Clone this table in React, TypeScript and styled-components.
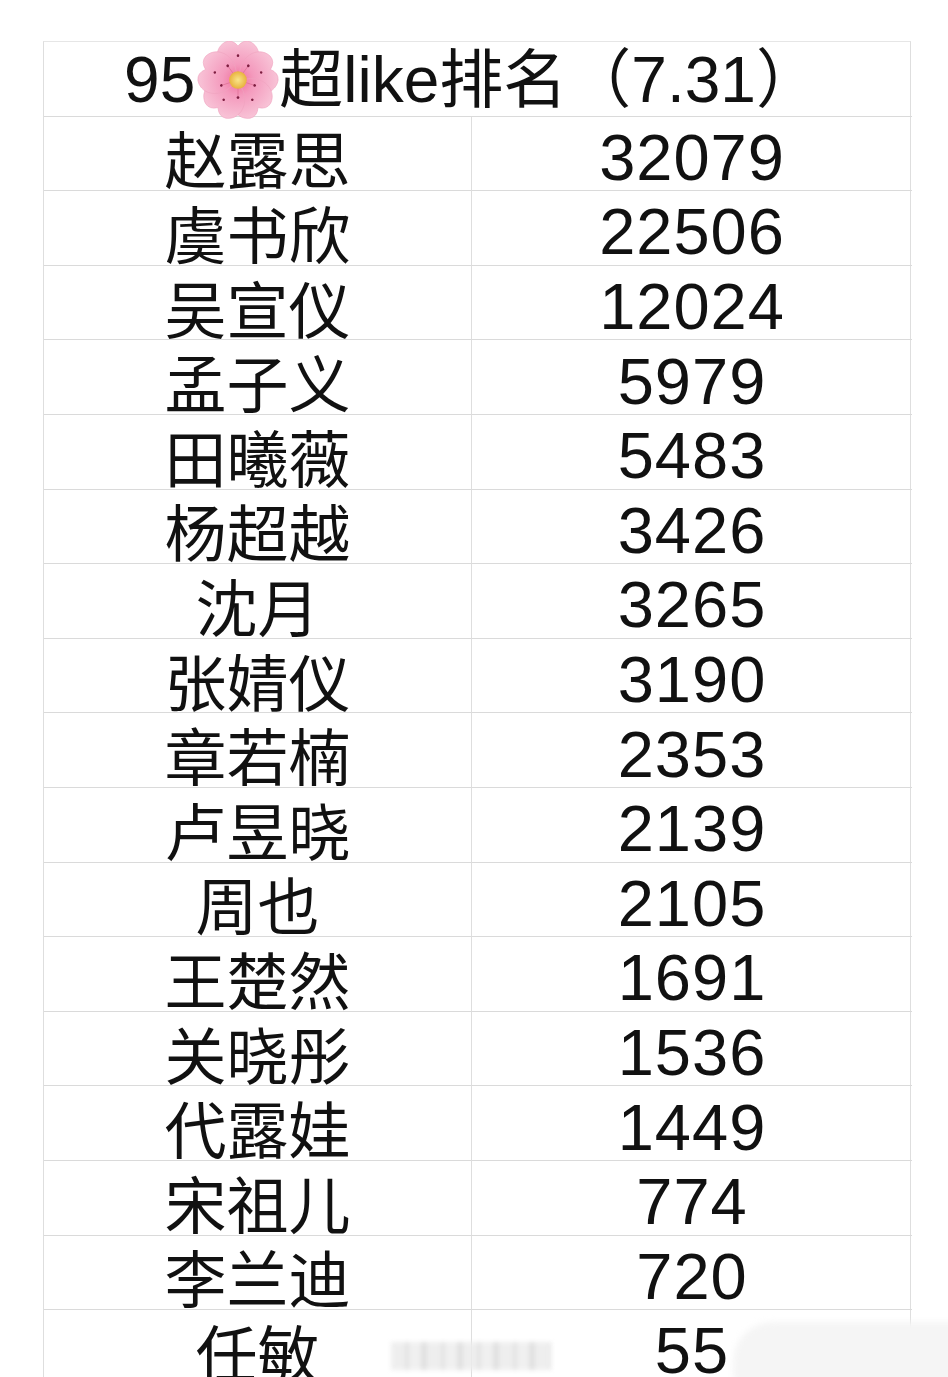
import { Fragment } from "react";
import styled, { createGlobalStyle } from "styled-components";

const GlobalStyle = createGlobalStyle`
  html, body {
    margin: 0;
    padding: 0;
    background: #ffffff;
  }
  body {
    font-family: "Liberation Sans", "Noto Sans CJK SC", sans-serif;
    color: #111111;
  }
`;

const rows: [string, string][] = [
  ["赵露思", "32079"],
  ["虞书欣", "22506"],
  ["吴宣仪", "12024"],
  ["孟子义", "5979"],
  ["田曦薇", "5483"],
  ["杨超越", "3426"],
  ["沈月", "3265"],
  ["张婧仪", "3190"],
  ["章若楠", "2353"],
  ["卢昱晓", "2139"],
  ["周也", "2105"],
  ["王楚然", "1691"],
  ["关晓彤", "1536"],
  ["代露娃", "1449"],
  ["宋祖儿", "774"],
  ["李兰迪", "720"],
  ["任敏", "55"],
];

const Page = styled.div`
  position: relative;
  height: 1377px;
  overflow: hidden;
  padding: 41px 37px 0 43px;
  box-sizing: border-box;
`;

const Sheet = styled.div`
  width: 868px;
  display: grid;
  grid-template-columns: 428px 440px;
  grid-auto-rows: 74.6px;
  border-top: 1px solid #e6e6e6;
  border-left: 1px solid #dedede;
  border-right: 1px solid #dedede;
  box-sizing: border-box;
`;

const Cell = styled.div<{ $span?: boolean; $divider?: boolean }>`
  grid-column: ${({ $span }) => ($span ? "1 / span 2" : "auto")};
  display: flex;
  align-items: center;
  justify-content: center;
  box-sizing: border-box;
  padding-top: 8px;
  border-bottom: 1px solid #dadada;
  border-right: ${({ $divider }) => ($divider ? "1px solid #dedede" : "none")};
  white-space: nowrap;
  line-height: 1;
`;

const Title = styled.div`
  font-family: "Liberation Sans", "Noto Sans CJK SC", sans-serif;
  font-size: 64px;
  display: flex;
  align-items: center;
  margin-top: -6px;
  margin-left: -12px;
`;

const Name = styled.span`
  font-family: "Noto Sans CJK SC", sans-serif;
  font-size: 62px;
`;

const Score = styled.span`
  font-family: "Liberation Sans", sans-serif;
  font-size: 65px;
  letter-spacing: 1px;
`;

const Blossom = styled.svg`
  width: 82px;
  height: 78px;
  margin: 0 0 0 2px;
  flex: none;
`;

const SoftPatch = styled.div`
  position: absolute;
  left: 733px;
  top: 1322px;
  width: 260px;
  height: 90px;
  border-radius: 40px;
  background: #f5f5f5;
  filter: blur(3px);
`;

const FadedMark = styled.div`
  position: absolute;
  left: 391px;
  top: 1342px;
  width: 160px;
  height: 28px;
  background: repeating-linear-gradient(
    90deg,
    #ececec 0 14px,
    #dfdfdf 14px 18px,
    #eeeeee 18px 30px,
    #dcdcdc 30px 36px
  );
  filter: blur(2px);
  opacity: 0.85;
`;

function CherryBlossom() {
  const petal =
    "M0,-2 C-23,-6 -28,-31 -13,-39 Q-6,-42 0,-35 Q6,-42 13,-39 C28,-31 23,-6 0,-2 Z";
  return (
    <Blossom viewBox="-40 -40 80 80" aria-hidden>
      <defs>
        <radialGradient id="petal" cx="0" cy="0" r="40" gradientUnits="userSpaceOnUse">
          <stop offset="0" stopColor="#ef6f9c" />
          <stop offset="0.4" stopColor="#f49abd" />
          <stop offset="1" stopColor="#f8c2d6" />
        </radialGradient>
        <radialGradient id="core" cx="0" cy="0" r="9" gradientUnits="userSpaceOnUse">
          <stop offset="0" stopColor="#f9e58a" />
          <stop offset="1" stopColor="#e8b23e" />
        </radialGradient>
      </defs>
      {[0, 72, 144, 216, 288].map((a) => (
        <path
          key={a}
          d={petal}
          fill="url(#petal)"
          stroke="#f0a3c0"
          strokeWidth="0.6"
          transform={`rotate(${a})`}
        />
      ))}
      {[36, 108, 180, 252, 324].map((a) => (
        <g key={a} transform={`rotate(${a})`}>
          <line x1="0" y1="-8" x2="0" y2="-17" stroke="#df7399" strokeWidth="0.8" />
          <circle cx="0" cy="-18" r="1.4" fill="#7d1d40" />
        </g>
      ))}
      {[0, 72, 144, 216, 288].map((a) => (
        <circle key={a} cx="0" cy="-25" r="1.3" fill="#7d1d40" transform={`rotate(${a})`} />
      ))}
      <circle cx="0" cy="0" r="9" fill="url(#core)" />
    </Blossom>
  );
}

export default function App() {
  return (
    <>
      <GlobalStyle />
      <Page>
        <Sheet>
          <Cell $span>
            <Title>
              95
              <CherryBlossom />
              超like排名（7.31）
            </Title>
          </Cell>
          {rows.map(([name, score]) => (
            <Fragment key={name}>
              <Cell $divider>
                <Name>{name}</Name>
              </Cell>
              <Cell>
                <Score>{score}</Score>
              </Cell>
            </Fragment>
          ))}
        </Sheet>
        <FadedMark />
        <SoftPatch />
      </Page>
    </>
  );
}
